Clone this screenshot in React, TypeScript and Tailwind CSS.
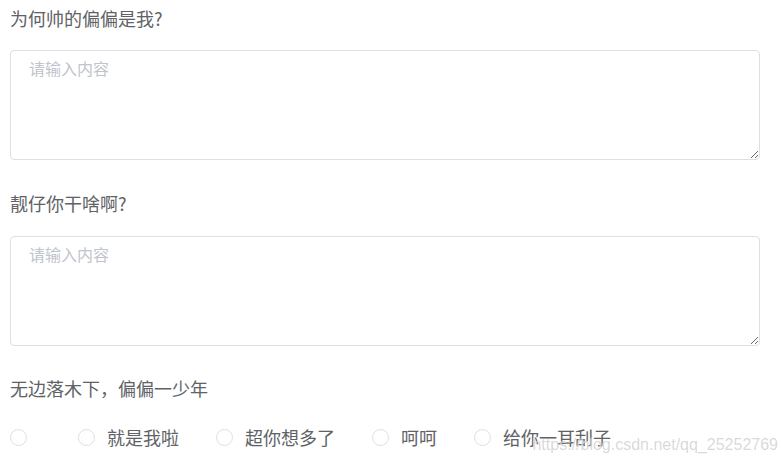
import React from 'react';

const options = ['', '就是我啦', '超你想多了', '呵呵', '给你一耳刮子'];

const Label: React.FC<{ text: string; className?: string }> = ({ text, className = '' }) => (
  <div className={`h-[36px] leading-[36px] text-[18px] text-[#606266] ${className}`}>{text}</div>
);

const Area: React.FC<{ className?: string }> = ({ className = '' }) => (
  <textarea
    placeholder="请输入内容"
    className={`block w-[750px] h-[110px] resize-y rounded-[4px] border border-[#dcdfe6] bg-white pl-[18px] pr-[15px] py-[5px] text-[16px] leading-[24px] text-[#606266] placeholder:text-[#c0c4cc] outline-none ${className}`}
  />
);

export default function App() {
  return (
    <div
      className="relative w-[784px] h-[466px] overflow-hidden bg-white px-[10px]"
      style={{ fontFamily: '"Noto Sans CJK SC", "Microsoft YaHei", sans-serif' }}
    >
      {/* 第一题 */}
      <Label text="为何帅的偏偏是我?" />
      <Area className="mt-[14px]" />

      {/* 第二题 */}
      <Label text="靓仔你干啥啊?" className="mt-[25px]" />
      <Area className="mt-[15px]" />

      {/* 第三题 */}
      <Label text="无边落木下，偏偏一少年" className="mt-[24px]" />
      <div className="mt-[22px] flex items-center h-[18px]">
        {options.map((o, i) => (
          <label key={i} className="flex items-center mr-[37px] cursor-pointer">
            <span className="block w-[17px] h-[17px] rounded-full border border-[#dcdfe6] bg-white" />
            <span className={`text-[18px] leading-[18px] text-[#606266] ${o ? 'pl-[12px]' : 'pl-[14px]'}`}>{o}</span>
          </label>
        ))}
      </div>

      {/* 水印 */}
      <div
        className="absolute right-[6px] top-[437px] text-[16px] leading-[16px] text-[rgba(170,170,170,0.45)] [text-shadow:0_0_1px_rgba(255,255,255,0.9)] pointer-events-none"
        style={{ fontFamily: '"Liberation Sans", Arial, sans-serif' }}
      >
        https://blog.csdn.net/qq_25252769
      </div>
    </div>
  );
}
